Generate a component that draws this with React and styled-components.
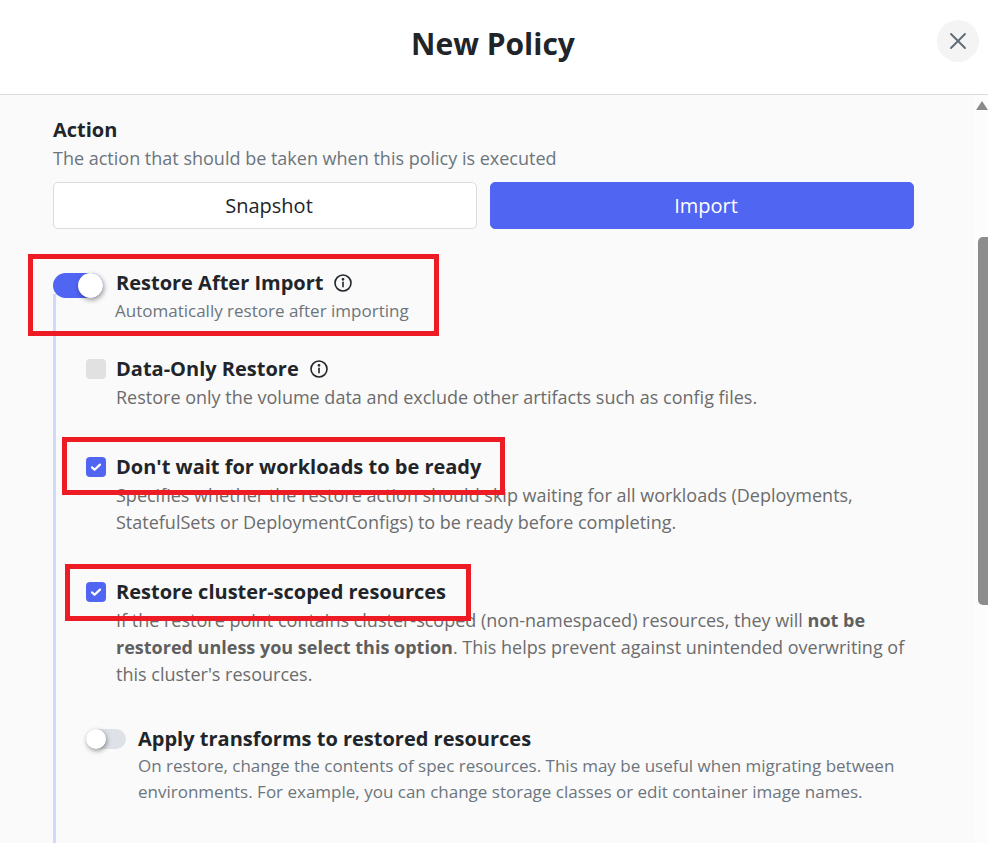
import React from "react";
import styled, { createGlobalStyle } from "styled-components";

const Global = createGlobalStyle`
  html, body { margin: 0; padding: 0; height: 100%; overflow: hidden; background: #fafafa; }
  body { font-family: "Open Sans", "Noto Sans", sans-serif; color: #212529; }
  * { box-sizing: border-box; }
`;

const Page = styled.div`
  position: relative;
  width: 988px;
  height: 843px;
  overflow: hidden;
  display: flex;
  flex-direction: column;
`;
const Header = styled.header`
  height: 95px;
  flex: none;
  background: #fff;
  border-bottom: 1px solid #dcdcdc;
  display: flex;
  align-items: center;
  justify-content: center;
  position: relative;
  padding: 0 2px 7px 0;
`;
const Title = styled.h1`
  margin: 0;
  font-size: 30px;
  line-height: 40px;
  font-weight: 700;
  color: #212529;
`;
const Close = styled.button`
  position: absolute;
  left: 937px;
  top: 20px;
  width: 42px;
  height: 42px;
  border: 0;
  border-radius: 50%;
  background: #f4f4f4;
  padding: 0;
  display: flex;
  align-items: center;
  justify-content: center;
`;
const Body = styled.div`
  flex: 1;
  display: flex;
  min-height: 0;
`;
const Content = styled.main`
  flex: 1;
  padding: 21px 60px 0 53px;
  overflow: hidden;
`;
const Scrollbar = styled.div`
  width: 14px;
  flex: none;
  background: #fcfcfc;
  display: flex;
  flex-direction: column;
  align-items: flex-end;
  padding-top: 6px;
`;
const Arrow = styled.div`
  width: 0;
  height: 0;
  border-left: 6px solid transparent;
  border-right: 6px solid transparent;
  border-bottom: 9px solid #8a8a8a;
`;
const Thumb = styled.div`
  width: 10px;
  height: 368px;
  margin-top: 127px;
  background: #8c8c8c;
  border-radius: 5px 0 0 5px;
`;
const Label = styled.div`
  font-size: 20px;
  line-height: 28px;
  font-weight: 700;
  color: #212529;
`;
const Hint = styled.div`
  font-size: 18px;
  line-height: 27px;
  padding-top: 1px;
  color: #6c757d;
`;
const Segments = styled.div`
  display: grid;
  grid-template-columns: 424px 424px;
  column-gap: 13px;
  margin-top: 10px;
`;
const Segment = styled.button`
  height: 47px;
  border-radius: 5px;
  font-family: inherit;
  font-size: 20px;
  padding: 0 0 0 8px;
  border: 1px solid ${(p) => (p.$active ? "#5065f2" : "#dcdcdc")};
  background: ${(p) => (p.$active ? "#5065f2" : "#fff")};
  color: ${(p) => (p.$active ? "#fff" : "#212529")};
`;
const Master = styled.div`
  display: flex;
  gap: 13px;
  margin-top: 44px;
`;
const MasterTitle = styled.div`
  display: flex;
  align-items: center;
  gap: 9px;
  font-size: 20px;
  line-height: 20px;
  font-weight: 700;
  color: #212529;
`;
const MasterHint = styled.div`
  font-size: 17px;
  line-height: 28px;
  margin: 4px 0 0 -1px;
  color: #6c757d;
`;
const Track = styled.span`
  flex: none;
  position: relative;
  display: block;
  width: ${(p) => (p.$big ? 50 : 40)}px;
  height: ${(p) => (p.$big ? 25 : 20)}px;
  border-radius: 13px;
  background: ${(p) => (p.$on ? "#5065f2" : "#dee2e8")};
  margin-top: ${(p) => (p.$big ? 0 : 4)}px;
`;
const Knob = styled.span`
  position: absolute;
  top: 0;
  ${(p) => (p.$on ? "right: 0;" : "left: 0;")}
  width: ${(p) => (p.$big ? 25 : 20)}px;
  height: ${(p) => (p.$big ? 25 : 20)}px;
  border-radius: 50%;
  background: #fff;
  box-shadow: 1px 2px 5px rgba(0, 0, 0, 0.4);
`;
const Nested = styled.div`
  border-left: 3px solid #cfdafd;
  margin-top: -31px;
  padding: 61px 0 0 30px;
  height: 600px;
`;
const Option = styled.div`
  display: flex;
  gap: 10px;
  margin-bottom: ${(p) => p.$gap}px;
`;
const Box = styled.span`
  flex: none;
  width: 20px;
  height: 20px;
  margin-top: 4px;
  border-radius: 4px;
  background: ${(p) => (p.$on ? "#5065f2" : "#e1e1e1")};
  display: flex;
  align-items: center;
  justify-content: center;
`;
const OptionTitle = styled.div`
  display: flex;
  align-items: center;
  gap: 10px;
  font-size: 20px;
  line-height: 28px;
  font-weight: 700;
  color: #212529;
`;
const OptionText = styled.div`
  font-size: 18px;
  line-height: 27px;
  padding-top: 1px;
  color: #6c6c6c;
  b { font-weight: 700; color: #5f5f5f; }
`;
const ToggleOption = styled.div`
  display: flex;
  gap: 12px;
`;
const ToggleHint = styled.div`
  font-size: 17px;
  line-height: 26px;
  color: #6c757d;
`;
const Callout = styled.div`
  position: absolute;
  left: ${(p) => p.$x}px;
  top: ${(p) => p.$y}px;
  width: ${(p) => p.$w}px;
  height: ${(p) => p.$h}px;
  border: 5px solid #ed1c24;
  pointer-events: none;
`;

const Info = () => (
  <svg width="20" height="20" viewBox="0 0 20 20" fill="none" stroke="#212529" strokeWidth="1.6" strokeLinecap="round">
    <circle cx="10" cy="10" r="8" />
    <path d="M10 9.2v4.6" />
    <circle cx="10" cy="6.3" r="0.6" fill="#212529" />
  </svg>
);
const Check = () => (
  <svg width="12" height="10" viewBox="0 0 12 10" fill="none" stroke="#fff" strokeWidth="2.2" strokeLinecap="round" strokeLinejoin="round">
    <path d="M2 5.4 4.6 7.8 10 2.6" />
  </svg>
);

export default function App() {
  return (
    <Page>
      <Global />
      <Header>
        <Title>New Policy</Title>
        <Close aria-label="Close">
          <svg width="18" height="18" viewBox="0 0 18 18" stroke="#5f6b76" strokeWidth="1.9" strokeLinecap="round">
            <path d="M2 2 16 16M16 2 2 16" />
          </svg>
        </Close>
      </Header>
      <Body>
        <Content>
          <Label>Action</Label>
          <Hint>The action that should be taken when this policy is executed</Hint>
          <Segments>
            <Segment>Snapshot</Segment>
            <Segment $active>Import</Segment>
          </Segments>
          <Master>
            <Track $big $on><Knob $big $on /></Track>
            <div>
              <MasterTitle>Restore After Import <Info /></MasterTitle>
              <MasterHint>Automatically restore after importing</MasterHint>
            </div>
          </Master>
          <Nested>
            <Option $gap={42}>
              <Box />
              <div>
                <OptionTitle>Data-Only Restore <Info /></OptionTitle>
                <OptionText>Restore only the volume data and exclude other artifacts such as config files.</OptionText>
              </div>
            </Option>
            <Option $gap={42}>
              <Box $on><Check /></Box>
              <div>
                <OptionTitle>Don't wait for workloads to be ready</OptionTitle>
                <OptionText>Specifies whether the restore action should skip waiting for all workloads (Deployments, StatefulSets or DeploymentConfigs) to be ready before completing.</OptionText>
              </div>
            </Option>
            <Option $gap={37}>
              <Box $on><Check /></Box>
              <div>
                <OptionTitle>Restore cluster-scoped resources</OptionTitle>
                <OptionText>If the restore point contains cluster-scoped (non-namespaced) resources, they will <b>not be restored unless you select this option</b>. This helps prevent against unintended overwriting of this cluster's resources.</OptionText>
              </div>
            </Option>
            <ToggleOption>
              <Track><Knob /></Track>
              <div>
                <OptionTitle>Apply transforms to restored resources</OptionTitle>
                <ToggleHint>On restore, change the contents of spec resources. This may be useful when migrating between environments. For example, you can change storage classes or edit container image names.</ToggleHint>
              </div>
            </ToggleOption>
          </Nested>
        </Content>
        <Scrollbar>
          <Arrow />
          <Thumb />
        </Scrollbar>
      </Body>
      <Callout $x={28} $y={254} $w={411} $h={82} />
      <Callout $x={62} $y={437} $w={443} $h={58} />
      <Callout $x={65} $y={564} $w={406} $h={57} />
    </Page>
  );
}
